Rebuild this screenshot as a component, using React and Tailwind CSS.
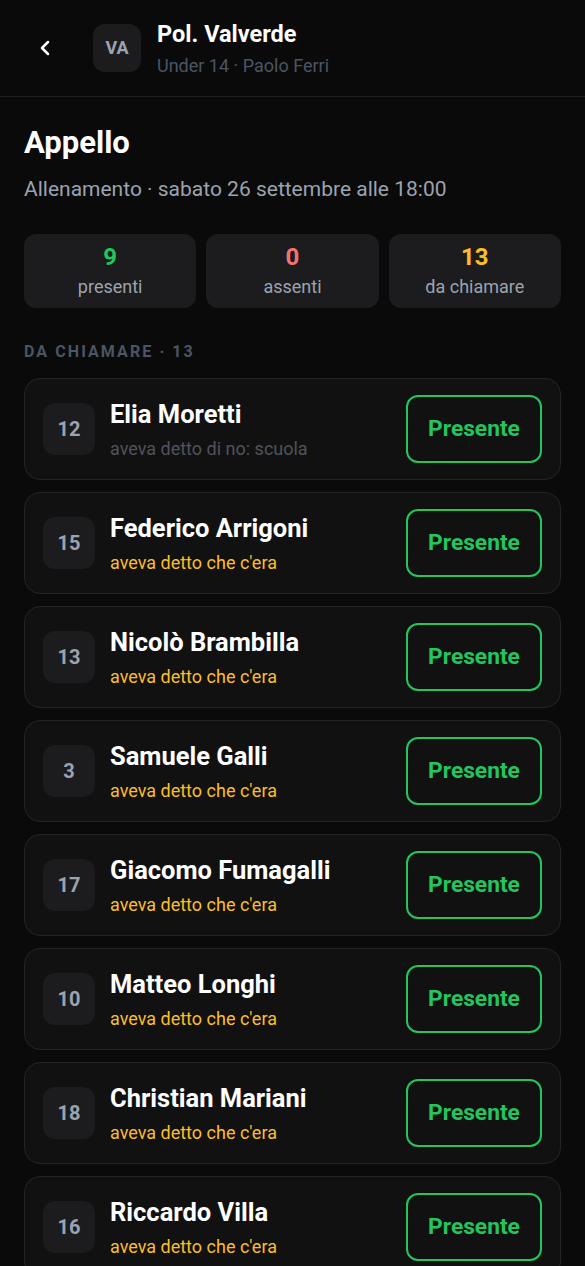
import { ChevronLeft } from 'lucide-react';

const players = [
  { num: 12, name: 'Elia Moretti', note: 'aveva detto di no: scuola', said: false },
  { num: 15, name: 'Federico Arrigoni', note: "aveva detto che c'era", said: true },
  { num: 13, name: 'Nicolò Brambilla', note: "aveva detto che c'era", said: true },
  { num: 3, name: 'Samuele Galli', note: "aveva detto che c'era", said: true },
  { num: 17, name: 'Giacomo Fumagalli', note: "aveva detto che c'era", said: true },
  { num: 10, name: 'Matteo Longhi', note: "aveva detto che c'era", said: true },
  { num: 18, name: 'Christian Mariani', note: "aveva detto che c'era", said: true },
  { num: 16, name: 'Riccardo Villa', note: "aveva detto che c'era", said: true },
];

function Stat({ value, label, color }) {
  return (
    <div className="flex-1 h-[74px] rounded-xl bg-[#1c1c1e] flex flex-col items-center justify-center">
      <span className={`text-2xl font-bold leading-7 ${color}`}>{value}</span>
      <span className="text-lg text-[#9ca3af] leading-6 mt-1">{label}</span>
    </div>
  );
}

function PlayerRow({ p }) {
  return (
    <div className="flex items-center rounded-2xl border border-[#242427] bg-[#111112] px-[18px] py-4">
      <div className="w-[52px] h-[52px] rounded-xl bg-[#1c1c1e] flex items-center justify-center text-xl font-bold text-[#9ca3af] shrink-0">
        {p.num}
      </div>
      <div className="ml-[15px] flex-1 min-w-0">
        <div className="text-[25.5px] font-bold text-white leading-[30px]">{p.name}</div>
        <div className={`text-lg leading-[22px] mt-[9px] ${p.said ? 'text-[#fbbf24]' : 'text-[#52525b]'}`}>{p.note}</div>
      </div>
      <button className="w-[136px] h-[68px] rounded-xl border-2 border-[#22c55e] text-[#22c55e] text-[22.75px] font-bold shrink-0">
        Presente
      </button>
    </div>
  );
}

export default function App() {
  return (
    <div className="min-h-screen bg-[#0a0a0a] font-['Roboto',sans-serif]">
      <header className="h-[97px] flex items-center pl-6 pr-6 border-b border-[#1f1f22]">
        <button className="w-[42px] h-[42px] flex items-center justify-center text-white">
          <ChevronLeft size={24} strokeWidth={2.5} />
        </button>
        <div className="ml-[27px] w-12 h-12 rounded-xl bg-[#1c1c1e] flex items-center justify-center text-lg font-bold text-[#9ca3af]">
          VA
        </div>
        <div className="ml-4">
          <div className="text-[23.5px] font-bold text-white leading-[30px]">Pol. Valverde</div>
          <div className="text-lg text-[#4b5563] leading-6 mt-[5px]">Under 14 · Paolo Ferri</div>
        </div>
      </header>

      <main className="px-6 pt-[27px]">
        <h1 className="text-[31px] font-bold text-white leading-[38px]">Appello</h1>
        <p className="text-[21px] text-[#9ca3af] leading-7 mt-[13px]">Allenamento · sabato 26 settembre alle 18:00</p>

        <div className="flex gap-2.5 mt-[31px]">
          <Stat value="9" label="presenti" color="text-[#22c55e]" />
          <Stat value="0" label="assenti" color="text-[#f87171]" />
          <Stat value="13" label="da chiamare" color="text-[#fbbf24]" />
        </div>

        <div className="mt-[34px] text-base leading-5 font-bold tracking-[0.13em] text-[#4b5563]">DA CHIAMARE · 13</div>

        <div className="mt-4 flex flex-col gap-3">
          {players.map((p) => (
            <PlayerRow key={p.num} p={p} />
          ))}
        </div>
      </main>
    </div>
  );
}
